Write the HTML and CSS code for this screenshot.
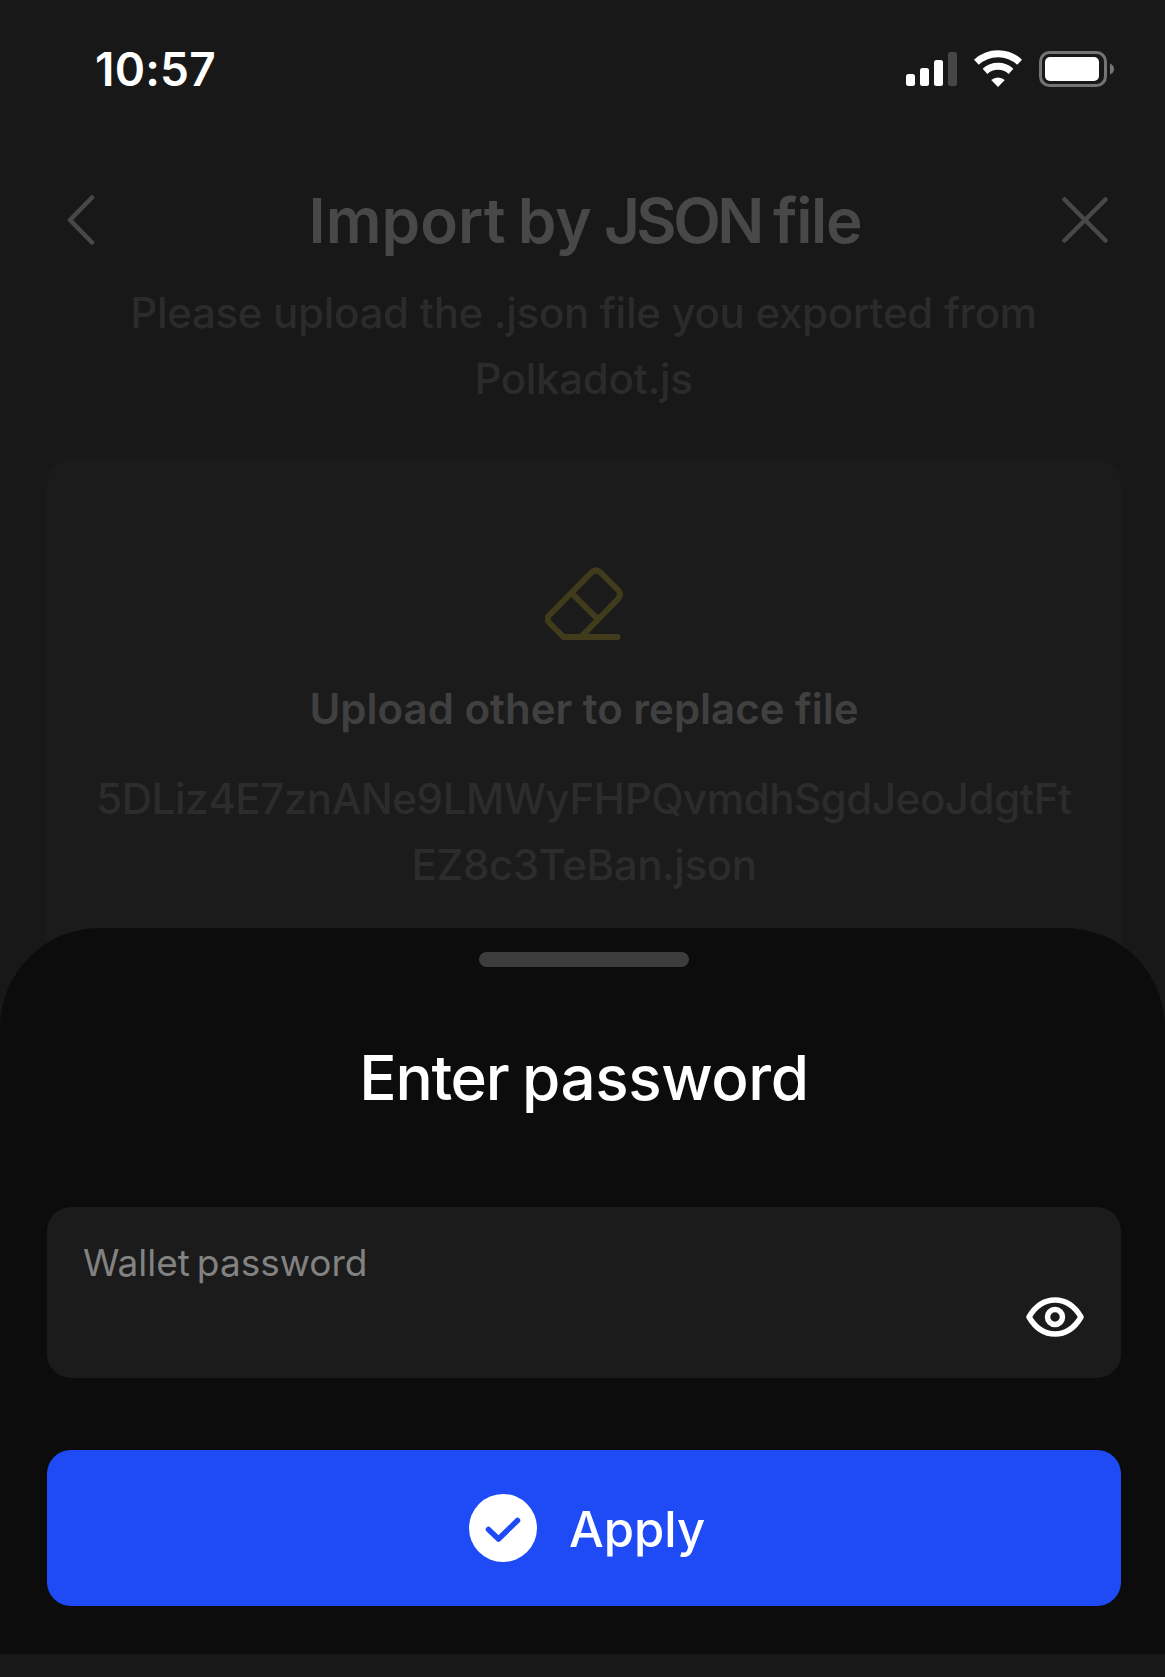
FILE: index.html
```
<!DOCTYPE html>
<html lang="en">
<head>
<meta charset="utf-8">
<title>Import by JSON file</title>
<link rel="stylesheet" href="styles.css">
</head>
<body>
<div class="screen">
  <div class="status-bar">
    <span class="time">10:57</span>
    <div class="status-icons">
      <svg width="51" height="34" viewBox="0 0 51 34" fill="#fff"><rect y="22" width="9" height="12" rx="2.5"/><rect x="14" y="16" width="9" height="18" rx="2.5"/><rect x="28" y="8" width="9" height="26" rx="2.5"/><rect x="42" width="9" height="34" rx="2.5" fill="#464646"/></svg>
      <svg width="50" height="38" viewBox="0 0 50 38" fill="none" stroke="#fff" stroke-width="7"><path d="M3.4 12.2a31.5 31.5 0 0 1 43.2 0"/><path d="M12 21.3a19.3 19.3 0 0 1 26 0"/><path d="M25 37l-6.8-7a10.5 10.5 0 0 1 13.6 0z" fill="#fff" stroke="none"/></svg>
      <svg width="76" height="36" viewBox="0 0 76 36"><rect x="1.5" y="1.5" width="65" height="33" rx="9" fill="none" stroke="#747474" stroke-width="3"/><rect x="6" y="6" width="54" height="24" rx="5" fill="#fff"/><path d="M71 12.5q4 1.500 4 5.500t-4 5.500z" fill="#747474"/></svg>
    </div>
  </div>
  <header class="header">
    <svg width="28" height="50" viewBox="0 0 28 50" class="icon"><path d="M25 2.500L3 25l22 22.500"/></svg>
    <h1 class="title">Import by <span class="caps">JSON</span> <span class="tight">file</span></h1>
    <svg width="46" height="46" viewBox="0 0 46 46" class="icon"><path d="M2.500 2.500l41 41M43.500 2.500l-41 41"/></svg>
  </header>
  <p class="subtitle">Please upload the .json file you exported from<br>Polkadot.js</p>
  <section class="upload">
    <svg width="78" height="74" viewBox="0 0 78 74" class="eraser"><path d="M18.500 70L4.500 56q-4-4 0-8L46 6q5-5 10 0l17 17q4 4 0 9L36 70M27 26.500l24 24M18.500 70H72.500"/></svg>
    <p class="upload-title">Upload other to replace file</p>
    <p class="file-name">5DLiz4E7znANe9LMWyFHPQvmdhSgdJeoJdgtFt<br>EZ8c3TeBan.json</p>
  </section>
  <section class="sheet">
    <div class="handle"></div>
    <h2 class="sheet-title"><span class="tight">Enter</span> password</h2>
    <div class="field">
      <label class="label">Wallet password</label>
      <svg width="60" height="42" viewBox="0 0 60 42" class="eye"><path d="M4 21Q14 4 30 4t26 17Q46 38 30 38T4 21z"/><circle cx="30" cy="21" r="7.500"/></svg>
    </div>
    <button class="apply">
      <svg width="68" height="68" viewBox="0 0 68 68"><circle cx="34" cy="34" r="34" fill="#fff"/><path d="M19.500 35.500l10 9.500L48.500 26.500" fill="none" stroke="#1f4bf7" stroke-width="5.500" stroke-linecap="round" stroke-linejoin="round"/></svg>
      <span class="apply-text">Apply</span>
    </button>
  </section>
</div>
</body>
</html>
```
FILE: styles.css
```
* { box-sizing: border-box; }
body { margin: 0; background: #181818; color: #fff; font-family: Inter, sans-serif; }
h1, h2, p { margin: 0; }
svg { display: block; flex: none; }
.screen { position: relative; width: 1165px; height: 1677px; overflow: hidden; }
.status-bar { display: flex; justify-content: space-between; align-items: center; height: 160px; padding: 0 50px 22px 95px; }
.time { font-size: 46px; font-weight: 600; letter-spacing: 0.2px; }
.status-icons { display: flex; align-items: center; gap: 16px; }
.header { display: flex; justify-content: space-between; align-items: center; height: 120px; padding: 0 57px 0 67px; }
.icon { fill: none; stroke: #484848; stroke-width: 4.5; stroke-linecap: round; stroke-linejoin: round; }
.title { margin-left: 13px; font-size: 62px; font-weight: 600; color: #484848; word-spacing: -3.5px; white-space: nowrap; }
.caps { letter-spacing: -3.5px; }
.tight { letter-spacing: -1.3px; }
.subtitle { padding-left: 2px; text-align: center; font-size: 42px; line-height: 66px; font-weight: 500; letter-spacing: -0.3px; color: #2b2b2b; white-space: nowrap; }
.upload { display: flex; flex-direction: column; align-items: center; height: 640px; margin: 48px 44px 0 47px; padding-top: 107px; border-radius: 24px; background: #1b1b1b; text-align: center; font-size: 42px; line-height: 66px; }
.eraser { fill: none; stroke: #403c1b; stroke-width: 6; stroke-linecap: round; stroke-linejoin: round; }
.upload-title { margin-top: 35px; font-weight: 600; color: #404040; }
.file-name { margin-top: 24px; font-weight: 500; letter-spacing: -0.42px; color: #2c2c2c; white-space: nowrap; }
.sheet { position: absolute; left: 0; right: 0; bottom: 23px; height: 726px; padding: 24px 44px 48px 47px; border-radius: 100px 100px 0 0; background: #0c0c0c; }
.handle { width: 210px; height: 15px; margin: 0 auto; border-radius: 7.5px; background: #3d3d3d; }
.sheet-title { margin-top: 70px; text-align: center; font-size: 62px; line-height: 81px; font-weight: 500; letter-spacing: -0.4px; word-spacing: -2.5px; }
.field { display: flex; justify-content: space-between; height: 171px; margin-top: 89px; padding: 32px 36px 0; border-radius: 24px; background: #1b1b1b; }
.label { font-size: 37px; line-height: 48px; word-spacing: -3.5px; color: #828282; }
.eye { margin-top: 57px; fill: none; stroke: #fff; stroke-width: 5.5; stroke-linejoin: round; }
.apply { display: flex; justify-content: center; align-items: center; gap: 32px; width: 100%; height: 156px; margin-top: 72px; padding: 0 0 0 6px; border: 0; border-radius: 24px; background: #1f4bf7; color: #fff; font-family: inherit; font-size: 49px; font-weight: 500; }
.apply-text { padding-top: 3px; }
```
